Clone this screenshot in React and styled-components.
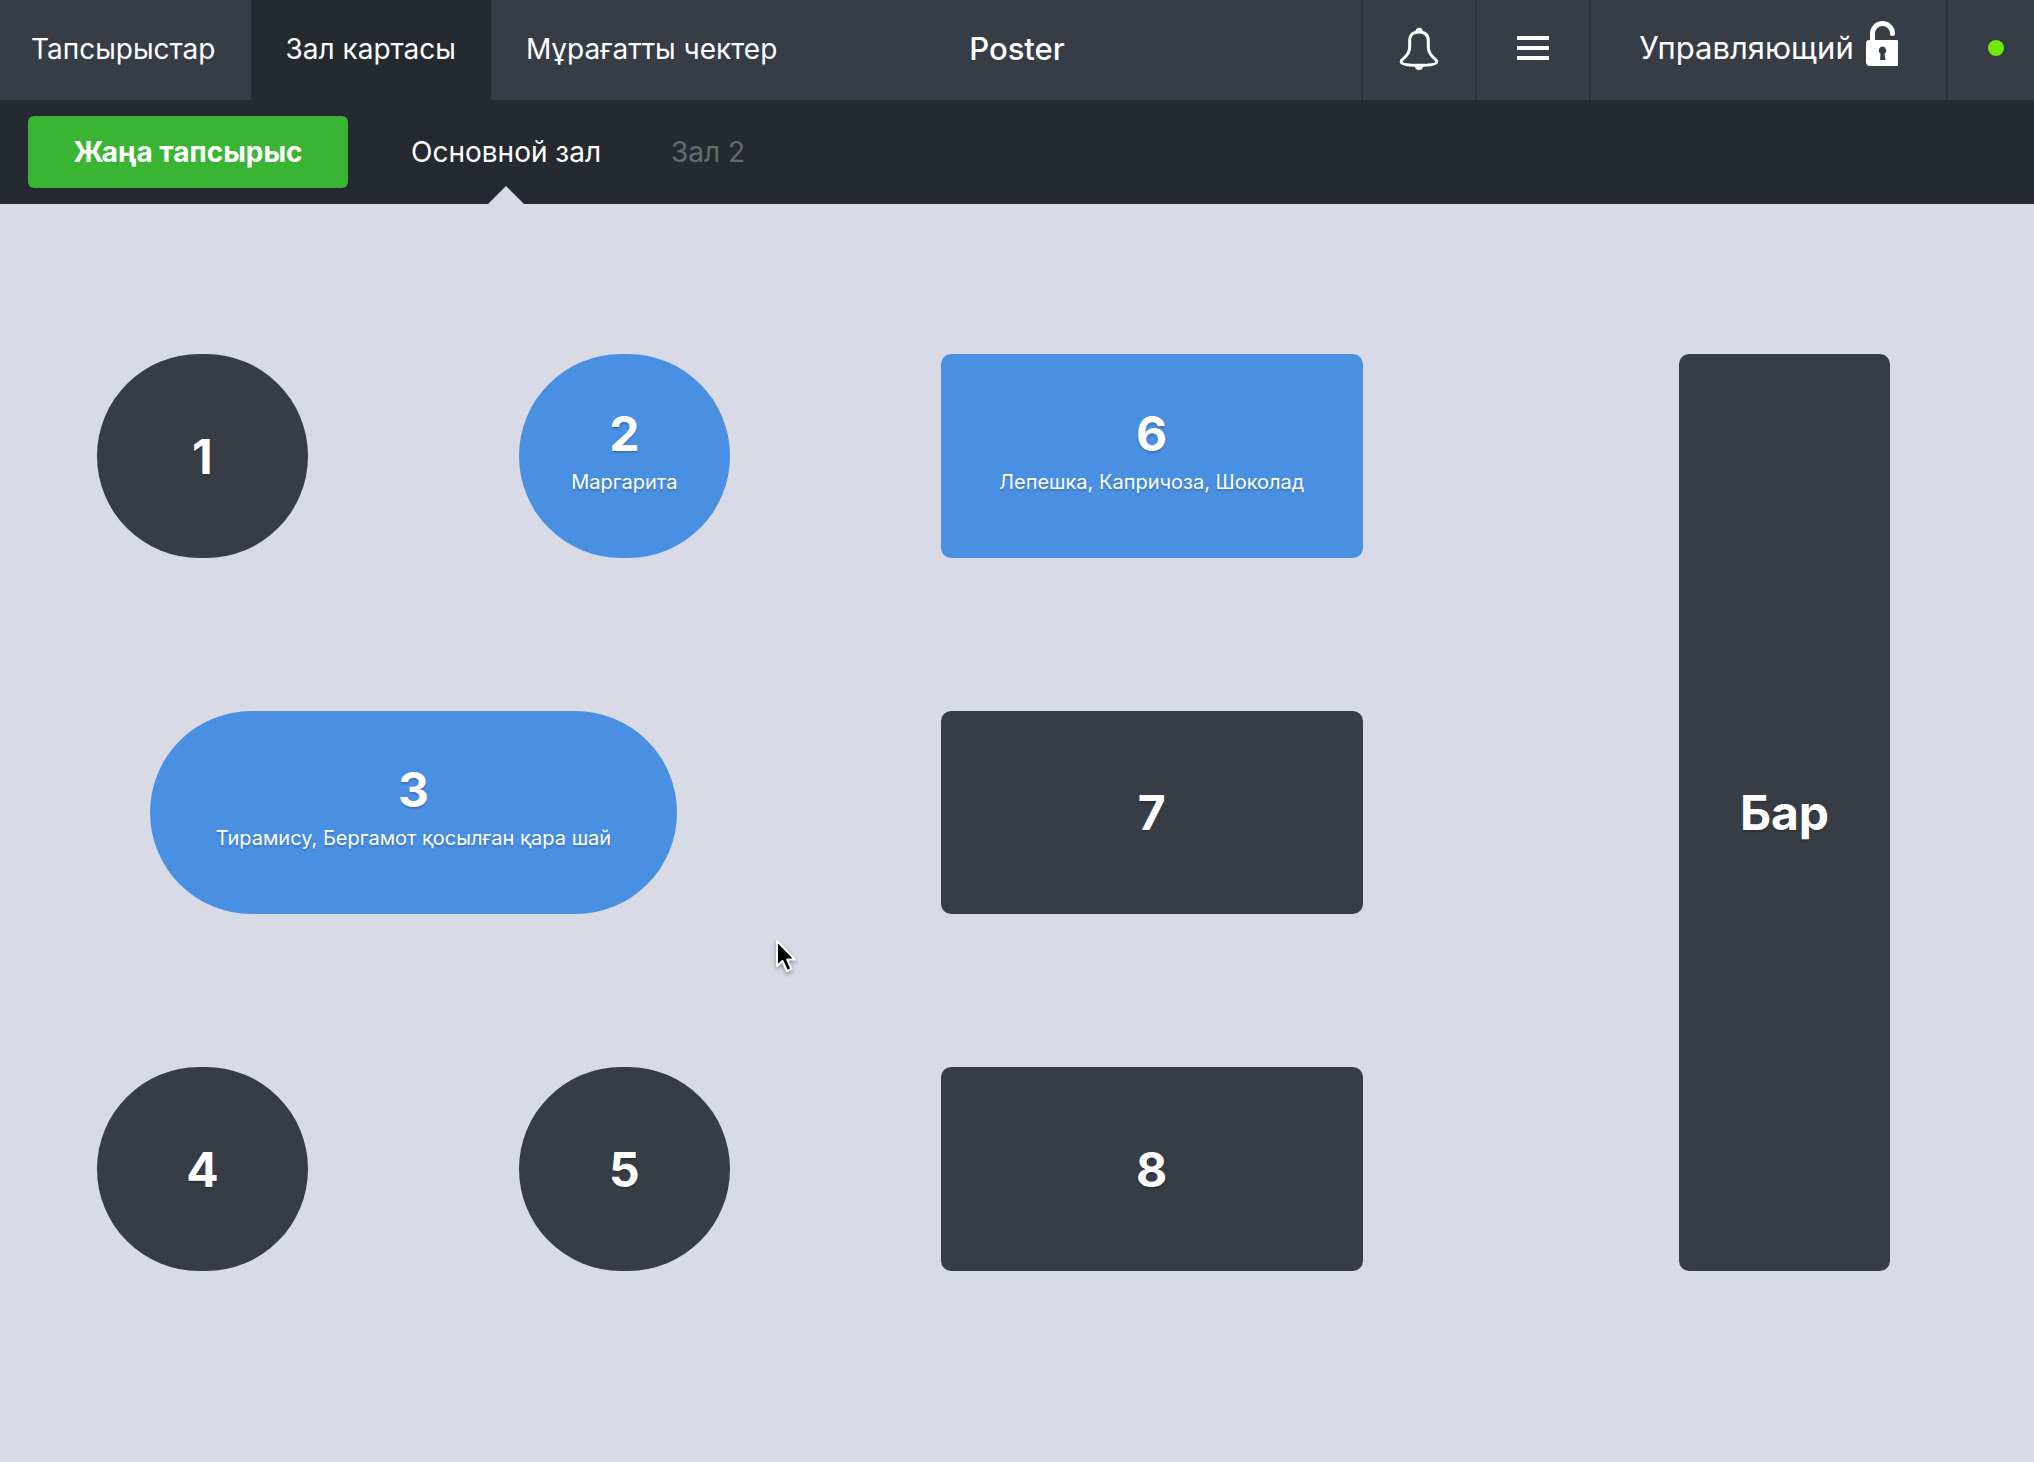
import React, { useState } from "react";
import styled, { createGlobalStyle } from "styled-components";

const GlobalStyle = createGlobalStyle`
  *, *::before, *::after { box-sizing: border-box; }
  body {
    margin: 0;
    background: #d8dae6;
    color: #fff;
    font-family: Inter, "Liberation Sans", sans-serif;
    -webkit-font-smoothing: antialiased;
  }
  button { font: inherit; color: inherit; border: 0; background: none; padding: 0; cursor: pointer; }
`;

const Page = styled.div`
  display: flex;
  flex-direction: column;
  min-height: 100vh;
`;

const Header = styled.header`
  display: grid;
  grid-template-columns: 1fr auto 1fr;
  height: 100px;
  background: #373d47;
`;

const MainNav = styled.nav`
  display: flex;
`;

const NavTab = styled.button`
  padding: 0 35px 2px;
  font-size: 28px;
  line-height: 32px;
  white-space: nowrap;
  background: ${(p) => (p.$active ? "#252a30" : "transparent")};

  &:first-child { padding-left: 31px; }
`;

const Title = styled.h1`
  margin: 0;
  padding-bottom: 2px;
  align-self: center;
  font-size: 31px;
  line-height: 38px;
  font-weight: 500;
`;

const Tools = styled.div`
  display: flex;
  justify-content: flex-end;
`;

const Tool = styled.button`
  display: flex;
  align-items: center;
  justify-content: center;
  gap: 12px;
  width: ${(p) => p.$width}px;
  padding-bottom: 4px;
  border-left: 2px solid #2d323a;
  font-size: 31px;
  line-height: 38px;
`;

const StatusTool = styled(Tool)`
  padding-left: 10px;
`;

const StatusDot = styled.span`
  width: 16px;
  height: 16px;
  border-radius: 50%;
  background: #70e80d;
`;

const HallBar = styled.div`
  display: flex;
  align-items: center;
  height: 104px;
  padding: 0 28px;
  background: #252a30;
`;

const NewOrder = styled.button`
  width: 320px;
  height: 72px;
  margin-right: 28px;
  border-radius: 6px;
  background: #3ab533;
  font-size: 28px;
  line-height: 32px;
  font-weight: 700;
`;

const HallTab = styled.button`
  position: relative;
  height: 100%;
  padding: 0 35px;
  font-size: 28px;
  line-height: 32px;
  color: ${(p) => (p.$active ? "#fff" : "#656a70")};

  &::after {
    content: "";
    display: ${(p) => (p.$active ? "block" : "none")};
    position: absolute;
    left: 50%;
    bottom: 0;
    margin-left: -18px;
    border: 18px solid transparent;
    border-top: 0;
    border-bottom-color: #d8dae6;
  }
`;

const Floor = styled.main`
  flex: 1;
  display: grid;
  grid-template-columns: repeat(34, minmax(0, 1fr));
  grid-template-rows: repeat(18, minmax(0, 1fr));
  padding: 150px 144px 191px 97px;
`;

const Table = styled.button`
  display: flex;
  flex-direction: column;
  align-items: center;
  justify-content: center;
  padding-top: 2px;
  grid-column: ${(p) => p.$col} / span ${(p) => p.$w};
  grid-row: ${(p) => p.$row} / span ${(p) => p.$h};
  border-radius: ${(p) => (p.$round ? 102 : 10)}px;
  background: ${(p) => (p.$busy ? "#4a90e2" : "#373d47")};
  text-shadow: 0 2px 2px rgba(0, 0, 0, 0.2);
`;

const TableName = styled.span`
  font-size: 48px;
  line-height: 48px;
  font-weight: 700;
`;

const TableNote = styled.span`
  margin: 12px 0 10px;
  font-size: 20px;
  line-height: 24px;
  white-space: nowrap;
`;

const Pointer = styled.svg`
  position: absolute;
  left: 774px;
  top: 938px;
  pointer-events: none;
  filter: drop-shadow(0 2px 2px rgba(0, 0, 0, 0.35));
`;

const LockDrawing = styled.svg`
  margin-bottom: 8px;
`;

const BellIcon = () => (
  <svg width="40" height="44" viewBox="0 0 40 44" fill="none" stroke="#fff" strokeWidth="3" aria-hidden="true">
    <path d="M20 6c-6.500 0-9.300 3-9.300 9v5.500c0 4.500-1.500 7.500-4.500 10.500-2.200 2.200-4 3-4 4.700 0 2.600 6 3.600 17.800 3.600s17.800-1 17.800-3.600c0-1.700-1.800-2.500-4-4.700-3-3-4.500-6-4.500-10.500V15c0-6-2.800-9-9.300-9z" />
    <path d="M17.800 5.500a2.200 2.200 0 1 1 4.400 0M17.500 40a2.500 2.500 0 0 0 5 0" />
  </svg>
);

const MenuIcon = () => (
  <svg width="32" height="24" viewBox="0 0 32 24" fill="#fff" aria-hidden="true">
    <path d="M0 0h32v4H0zM0 10h32v4H0zM0 20h32v4H0z" />
  </svg>
);

const LockIcon = () => (
  <LockDrawing width="32" height="46" viewBox="0 0 32 46" aria-hidden="true">
    <path d="M6.500 21V12.500a10 10 0 0 1 20 0" fill="none" stroke="#fff" strokeWidth="5" strokeLinecap="round" />
    <path fill="#fff" fillRule="evenodd" d="M3 19h28a1 1 0 0 1 1 1v25H4a4 4 0 0 1-4-4V22a3 3 0 0 1 3-3zM16.500 25.500a4 4 0 0 0-2 7.300L14 39h5.500l-1-6.200a4 4 0 0 0-2-7.300z" />
  </LockDrawing>
);

const NAV = ["Тапсырыстар", "Зал картасы", "Мұрағатты чектер"];
const HALLS = ["Основной зал", "Зал 2"];

const TABLES = [
  { name: "1", col: 1, row: 1, w: 4, h: 4, round: true },
  { name: "2", col: 9, row: 1, w: 4, h: 4, round: true, note: "Маргарита" },
  { name: "6", col: 17, row: 1, w: 8, h: 4, note: "Лепешка, Капричоза, Шоколад" },
  { name: "3", col: 2, row: 8, w: 10, h: 4, round: true, note: "Тирамису, Бергамот қосылған қара шай" },
  { name: "7", col: 17, row: 8, w: 8, h: 4 },
  { name: "4", col: 1, row: 15, w: 4, h: 4, round: true },
  { name: "5", col: 9, row: 15, w: 4, h: 4, round: true },
  { name: "8", col: 17, row: 15, w: 8, h: 4 },
  { name: "Бар", col: 31, row: 1, w: 4, h: 18 },
];

export default function App() {
  const [nav, setNav] = useState(1);
  const [hall, setHall] = useState(0);

  return (
    <Page>
      <GlobalStyle />
      <Header>
        <MainNav>
          {NAV.map((label, i) => (
            <NavTab key={label} $active={i === nav} onClick={() => setNav(i)}>{label}</NavTab>
          ))}
        </MainNav>
        <Title>Poster</Title>
        <Tools>
          <Tool $width={114}><BellIcon /></Tool>
          <Tool $width={114}><MenuIcon /></Tool>
          <Tool $width={357}>Управляющий<LockIcon /></Tool>
          <StatusTool $width={88}><StatusDot /></StatusTool>
        </Tools>
      </Header>
      <HallBar>
        <NewOrder>Жаңа тапсырыс</NewOrder>
        {HALLS.map((label, i) => (
          <HallTab key={label} $active={i === hall} onClick={() => setHall(i)}>{label}</HallTab>
        ))}
      </HallBar>
      <Floor>
        {TABLES.map((t) => (
          <Table key={t.name} $col={t.col} $row={t.row} $w={t.w} $h={t.h} $round={t.round} $busy={Boolean(t.note)}>
            <TableName>{t.name}</TableName>
            {t.note && <TableNote>{t.note}</TableNote>}
          </Table>
        ))}
      </Floor>
      <Pointer width="24" height="36" viewBox="0 0 24 36" aria-hidden="true">
        <path d="M3 3v25l5.500-5 4.500 10 4.500-2-4.300-9.500H21z" fill="#000" stroke="#fff" strokeWidth="2" strokeLinejoin="round" />
      </Pointer>
    </Page>
  );
}
